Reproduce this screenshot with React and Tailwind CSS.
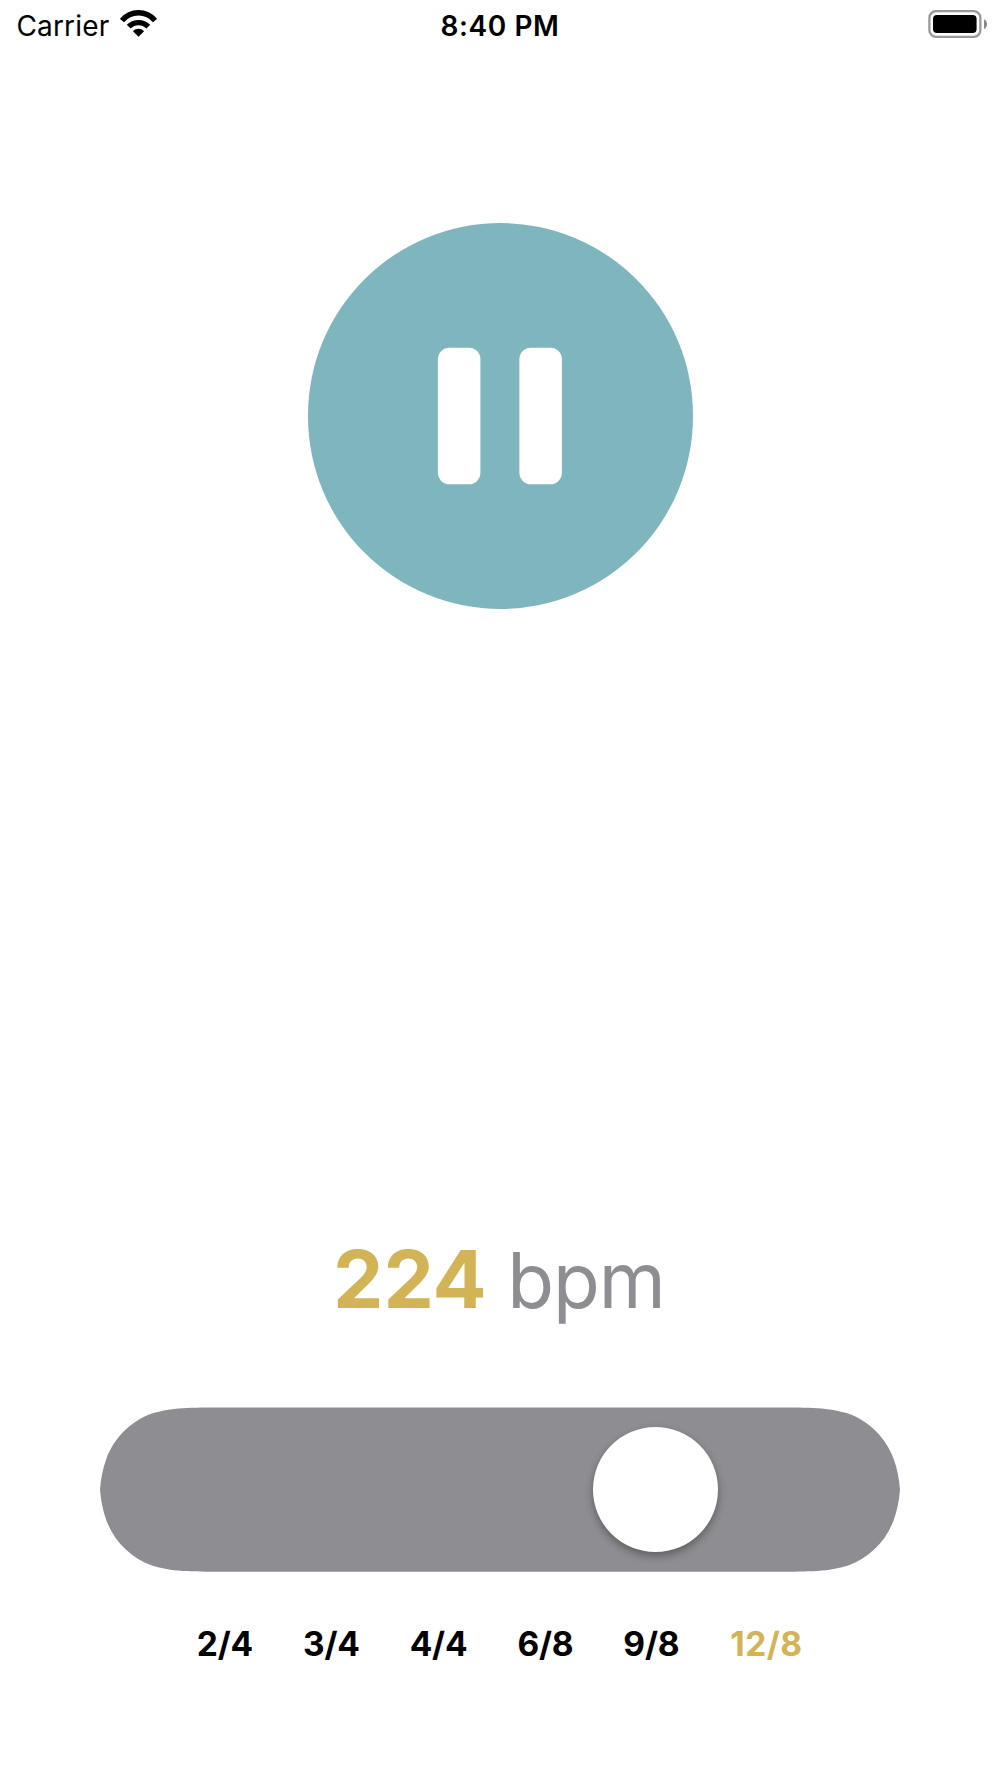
const signatures = ["2/4", "3/4", "4/4", "6/8", "9/8", "12/8"];

function WifiIcon() {
  return (
    <svg className="ml-[11px] mt-[10px] h-[27px] w-[37px]" viewBox="0 0 37 27" fill="none">
      <path d="M2 10.6A21.3 21.3 0 0 1 35 10.6" stroke="#000" strokeWidth="5.3" />
      <path d="M8.7 16.7A13.6 13.6 0 0 1 28.3 16.7" stroke="#000" strokeWidth="5.3" />
      <path d="M12.9 21.2A7.8 7.8 0 0 1 24.1 21.2L18.5 26.8Z" fill="#000" />
    </svg>
  );
}

function BatteryIcon() {
  return (
    <svg className="mr-[12px] mt-[10px] h-[28px] w-[60px]" viewBox="0 0 60 28" fill="none">
      <rect x="1.4" y="1.2" width="51" height="25.6" rx="6.5" stroke="#999" strokeWidth="2.3" />
      <rect x="5" y="5" width="43.6" height="18" rx="4" fill="#000" />
      <path d="M56 9.2C60 11 60 17.2 56 19Z" fill="#8a8a8a" />
    </svg>
  );
}

function StatusBar() {
  return (
    <header className="grid h-[60px] grid-cols-3 text-[28px] leading-[34px]">
      <div className="flex items-start pl-[16.5px]">
        <span className="mt-[9px] tracking-[0.15px]">Carrier</span>
        <WifiIcon />
      </div>
      <div className="mt-[9px] text-center font-semibold tracking-[0.6px]">8:40 PM</div>
      <div className="flex items-start justify-end">
        <BatteryIcon />
      </div>
    </header>
  );
}

export default function App() {
  return (
    <main className="flex h-[1778px] w-[1000px] flex-col overflow-hidden bg-white font-[Inter,sans-serif] text-black">
      <StatusBar />
      <button
        aria-label="Pause"
        className="ml-[307.5px] mt-[163px] flex size-[385.6px] shrink-0 items-center justify-center rounded-full bg-[#7fb6be]"
      >
        <svg className="h-[138px] w-[126px]" viewBox="0 0 126 138" fill="#fff">
          <rect x="0.9" y="0.7" width="42.5" height="136.6" rx="11.5" />
          <rect x="82.4" y="0.7" width="42.5" height="136.6" rx="11.5" />
        </svg>
      </button>
      <div className="ml-[333px] mt-[622px] flex h-[96px] items-baseline whitespace-pre leading-[96px]">
        <span className="text-[80px] font-bold tracking-[0px] text-[#d2b356]">224</span>
        <span className="ml-[20.5px] text-[76.5px] tracking-[-1px] text-[#8e8d92]">bpm</span>
      </div>
      <div className="ml-[100px] mt-[80.8px] flex h-[164.4px] w-[800px] shrink-0 items-center bg-[#8e8d92] [clip-path:path('M125.7_0H674.3C710.5_0_728.6_0_748.1_6.2C769.4_13.9_786.1_30.6_793.8_51.9C797.1_61_799.2_71.5_800_82.2C799.2_92.9_797.1_103.4_793.8_112.5C786.1_133.8_769.4_150.5_748.1_158.2C728.6_164.4_710.5_164.4_674.3_164.4H125.7C89.5_164.4_71.4_164.4_51.9_158.2C30.6_150.5_13.9_133.8_6.2_112.5C2.9_103.4_0.8_92.9_0_82.2C0.8_71.5_2.9_61_6.2_51.9C13.9_30.6_30.6_13.9_51.9_6.2C71.4_0_89.5_0_125.7_0Z')]">
        <div className="ml-[492.5px] size-[125.8px] rounded-full bg-white shadow-[0_4px_9px_rgba(0,0,0,0.33)]" />
      </div>
      <nav className="ml-[196.8px] mt-[52px] flex gap-[50px] text-[33.5px] font-bold leading-[40px] tracking-[-0.2px]">
        {signatures.map((s) => (
          <button
            key={s}
            className={s === "12/8" ? "ml-[1px] tracking-[0.5px] text-[#d2b356]" : "text-black"}
          >
            {s}
          </button>
        ))}
      </nav>
    </main>
  );
}
